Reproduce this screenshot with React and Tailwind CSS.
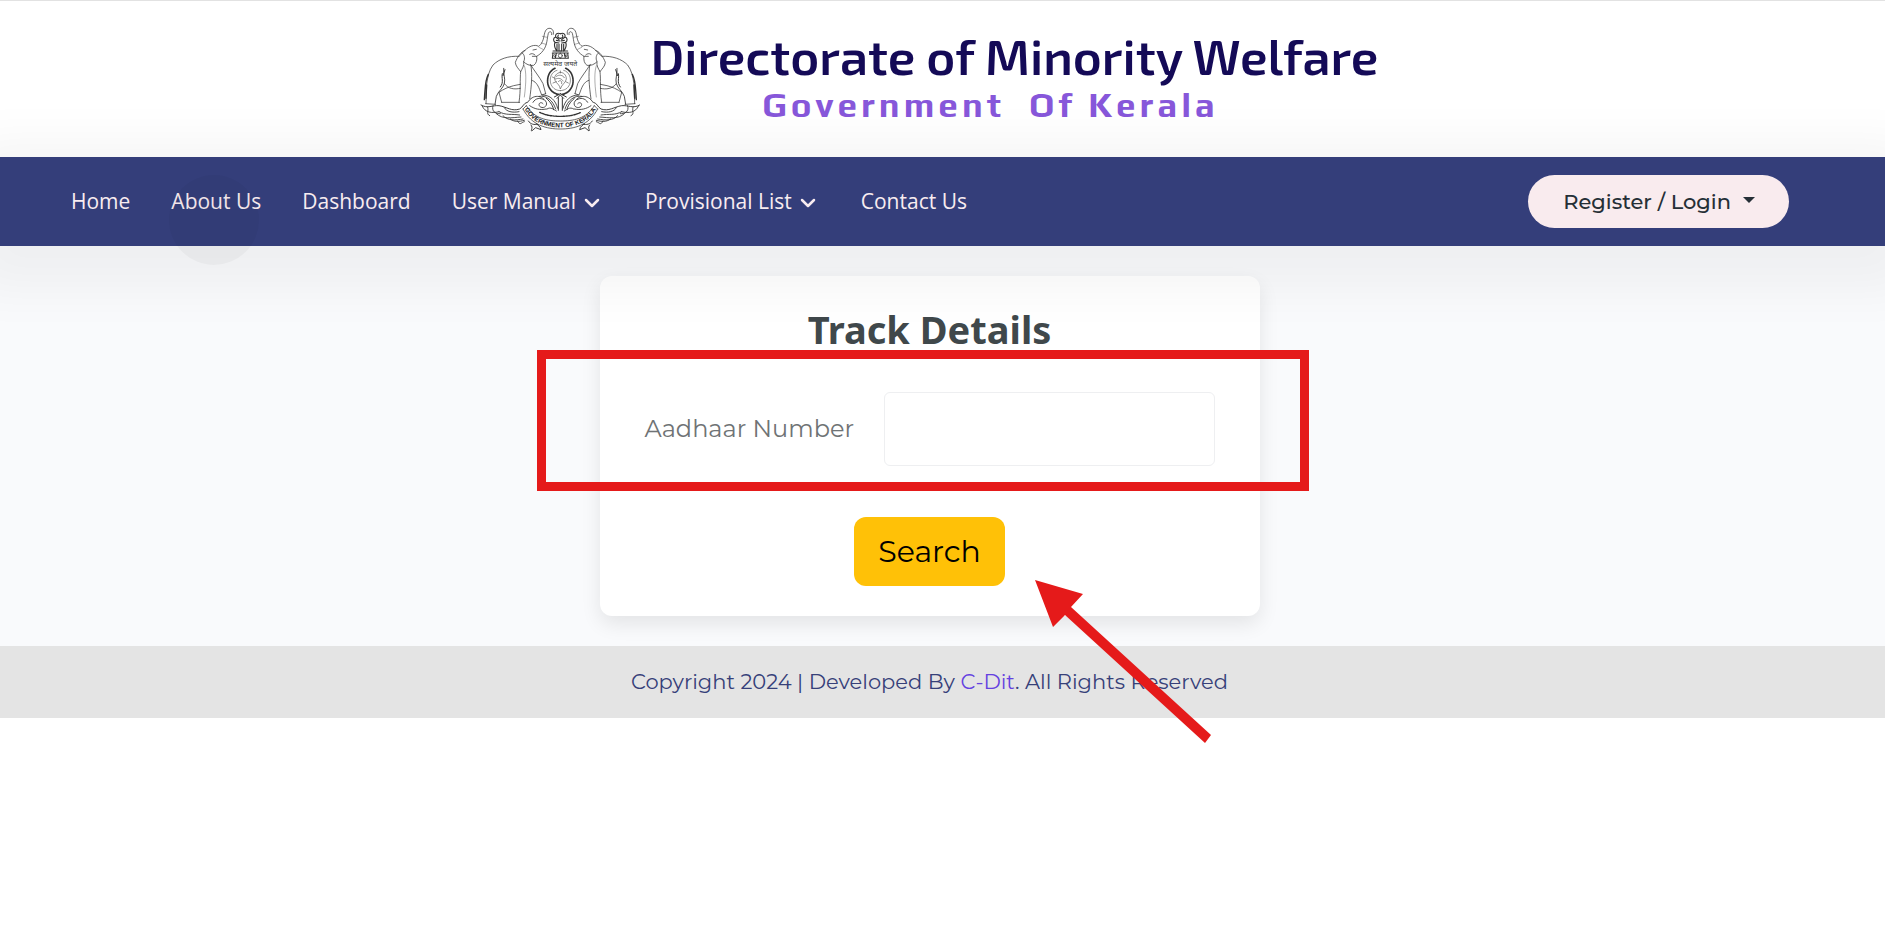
import { ChevronDown } from "lucide-react";

const NAV_ITEMS = [
  { label: "Home" },
  { label: "About Us" },
  { label: "Dashboard" },
  { label: "User Manual", menu: true },
  { label: "Provisional List", menu: true },
  { label: "Contact Us" },
];

function EmblemHalf() {
  return (
    <>
      {/* trunk and head */}
      <path d="M247 58 C250 44 240 37 230 41 C218 47 221 66 214 80 C211 87 207 91 203 94 C190 87 174 94 162 106 L146 122" />
      <path d="M242 59 C244 49 235 47 232 55 C228 70 229 90 217 106 C210 116 203 120 197 124 C199 134 196 146 188 151 C176 153 165 148 158 140" />
      <path d="M176 118 C182 114 188 116 192 120 M186 105 L196 103 M197 124 L184 124" />
      <path d="M214 64 L228 67 M211 84 L225 88 M204 97 L216 103" strokeWidth="1.2" />
      {/* ear */}
      <path d="M162 106 C150 110 139 126 133 142 C134 154 142 160 149 170 C154 160 160 153 158 140 C163 130 160 118 154 114" />
      {/* back, tail and hind legs */}
      <path d="M144 124 C112 122 84 132 66 150 C54 166 50 186 47 208 L45 266" />
      <path d="M52 178 C42 198 43 218 41 238 L40 254 M47 210 L45 250" strokeWidth="4" />
      <path d="M98 160 C96 178 104 190 100 206 C96 220 82 228 76 244 L72 268" strokeWidth="2.6" />
      <path d="M94 176 C90 190 100 200 88 216 M102 164 L96 182" strokeWidth="3" />
      <path d="M84 232 C98 222 112 216 128 212 L148 208 M84 232 L92 262" />
      <path d="M100 206 C112 222 130 224 148 220" />
      {/* front legs */}
      <path d="M149 170 C146 196 150 222 144 262 M180 152 C184 180 182 210 176 252" />
      <path d="M160 152 C166 170 166 200 160 246" strokeWidth="1.2" />
      <path d="M178 148 C190 168 206 186 216 206 L224 236 M182 196 C192 198 200 208 206 224 L212 240 L224 236" />
      <path d="M44 266 L74 268 M92 262 L146 262" />
      {/* foliage */}
      <path d="M30 270 C50 282 64 270 84 272 C108 276 122 290 146 282 C156 276 158 264 168 262" strokeWidth="2.8" />
      <path d="M34 274 C42 292 62 296 84 290 M50 276 C54 290 44 296 56 302 M66 272 C60 290 76 298 88 296 M84 290 C104 302 122 296 146 300 M76 296 C94 314 122 308 150 306 M96 302 C110 318 132 316 156 312 M100 278 C106 290 124 294 144 290 M118 312 C130 322 144 320 160 316 M140 318 C148 334 150 322 160 320" strokeWidth="2.6" />
      <path d="M180 330 C188 340 178 344 182 348 L194 338 L210 344 C208 332 200 332 196 326 M172 318 C178 328 190 330 200 328" strokeWidth="2.8" />
      {/* scrolls next to the centre */}
      <path d="M170 262 C186 236 214 240 226 262 C230 276 214 282 206 274 C200 266 210 258 216 266 M186 262 C194 248 208 248 218 254 M176 272 C190 282 206 286 226 282" strokeWidth="2.6" />
      <path d="M204 244 C226 240 246 256 254 282 M214 240 C238 240 254 256 260 280 M228 282 C240 274 248 284 256 288" strokeWidth="2.6" />
      <path d="M226 250 C240 262 246 274 248 284 M262 248 L262 286" strokeWidth="3" />
      {/* wreath */}
      <path d="M252 160 C232 168 226 194 232 212 C238 228 250 236 262 238" strokeWidth="5" strokeDasharray="4 2" />
      <path d="M258 166 C240 170 234 192 240 208 C246 222 256 226 268 227" strokeWidth="1.6" />
      <path d="M268 236 L250 246 M268 240 L258 250" strokeWidth="3" />
      {/* lion capital */}
      <path d="M268 56 C258 52 252 58 254 66 C246 68 246 78 252 82 C248 92 252 100 256 106 M262 60 C258 66 262 70 268 70 M254 66 L264 74 M252 82 L264 84 M258 88 L258 108 M264 88 L264 108 M256 76 L266 78" strokeWidth="3.4" />
      <path d="M246 108 L268 108 M244 114 L268 114 M244 130 L268 130 M246 114 L244 130 M256 115 L253 129" strokeWidth="3.2" />
      <circle cx="251" cy="122" r="3" />
    </>
  );
}

function Emblem() {
  return (
    <svg
      viewBox="24 0 516 375"
      className="h-[125px] w-[172px] shrink-0"
      fill="none"
      stroke="#333333"
      strokeWidth="2.2"
      strokeLinecap="round"
      strokeLinejoin="round"
      role="img"
      aria-label="Government of Kerala emblem"
    >
      <EmblemHalf />
      <g transform="translate(536 0) scale(-1 1)">
        <EmblemHalf />
      </g>
      <circle cx="268" cy="122" r="6" />
      {/* conch */}
      <g stroke="#666666">
        <path d="M268 172 C256 174 248 184 252 196 C258 208 266 208 268 222 C272 208 284 204 286 192 C286 180 278 172 268 172 M256 184 C264 178 276 180 280 188 M254 192 C262 188 272 190 276 198 M262 200 C266 194 274 196 272 206 M268 168 L268 174" />
        <path d="M244 186 L252 190 M284 200 L292 204 M246 204 L256 200" />
      </g>
      {/* ribbon */}
      <path d="M166 272 C190 312 230 318 268 318 C306 318 346 312 370 272" />
      <path d="M156 282 C182 332 228 342 268 342 C308 342 354 332 380 282" />
      <path d="M156 282 L166 272 M380 282 L370 272" />
      <path d="M206 292 C226 302 250 304 268 304 C286 304 310 302 330 292" strokeDasharray="5 3" strokeWidth="4" />
      <path id="ribbon-line" d="M160 282 C186 326 228 337 268 337 C308 337 350 326 376 282" stroke="none" />
      <text fill="#222222" stroke="none" className="font-['Liberation_Sans'] text-[19px] font-bold">
        <textPath href="#ribbon-line" startOffset="50%" textAnchor="middle">
          GOVERNMENT OF KERALA
        </textPath>
      </text>
      <text x="268" y="153" textAnchor="middle" fill="#3a3a3a" stroke="none" className="font-['Noto_Sans_Devanagari','Noto_Sans',sans-serif] text-[21px]">
        सत्यमेव जयते
      </text>
    </svg>
  );
}

function Header() {
  return (
    <header className="flex h-[157px] items-start justify-center border-t border-[#e2e2e2] bg-white pt-[14px] pr-7">
      <Emblem />
      <div className="pt-1.5 font-['Exo_2','Noto_Sans',sans-serif]">
        <h1 className="text-[50px] leading-[68px] font-semibold whitespace-nowrap text-[#140a57]">
          Directorate of Minority Welfare
        </h1>
        <p className="pr-[48px] text-center font-['Play','Exo_2',sans-serif] text-[35px] leading-[32px] font-bold tracking-[4px] whitespace-pre text-[#8757da]">
          {"Government  Of Kerala"}
        </p>
      </div>
    </header>
  );
}

function NavBar() {
  return (
    <nav className="relative z-10 flex h-[89px] items-center justify-between bg-[#343e7a] pr-24 pl-[71px] shadow-[0_14px_50px_30px_rgba(0,0,0,0.045)]">
      <div className="pointer-events-none absolute top-[18px] left-[169px] size-[90px] rounded-full bg-black/3" />
      <ul className="flex items-center gap-[41px] font-['Open_Sans',sans-serif] text-[21px] text-[#f8ecf0]">
        {NAV_ITEMS.map((item) => (
          <li key={item.label}>
            <a href="#" className="flex items-center gap-1 whitespace-nowrap">
              {item.label}
              {item.menu && <ChevronDown className="mt-0.5 size-6" strokeWidth={2.5} />}
            </a>
          </li>
        ))}
      </ul>
      <button
        type="button"
        className="flex h-[53px] items-center gap-3 rounded-full bg-[#f9ebee] pr-[34px] pl-[35px] font-['Montserrat','Inter',sans-serif] text-[21px] font-medium whitespace-nowrap text-[#252f36]"
      >
        Register / Login
        <svg viewBox="0 0 12 6" className="mb-1 h-[6px] w-3" aria-hidden="true">
          <path d="M0 0H12L6 6Z" fill="currentColor" />
        </svg>
      </button>
    </nav>
  );
}

function TrackCard() {
  return (
    <form
      className="relative flex w-[660px] flex-col items-center rounded-xl bg-white px-[45px] pt-[29px] pb-[30px] font-['Montserrat','Inter',sans-serif] shadow-[0_8px_20px_rgba(0,0,0,0.09)]"
      onSubmit={(e) => e.preventDefault()}
    >
      <h2 className="font-['Noto_Sans',sans-serif] text-[38px] leading-[48px] font-bold text-[#40484b]">
        Track Details
      </h2>
      <div className="mt-[39px] flex w-full items-center justify-between">
        <label htmlFor="aadhaar" className="text-[24px] whitespace-nowrap text-[#6f7375]">
          Aadhaar Number
        </label>
        <input
          id="aadhaar"
          type="text"
          className="h-[74px] w-[331px] rounded-md border border-[#eeeff1] bg-white px-4 text-[24px] outline-none"
        />
      </div>
      <button
        type="submit"
        className="mt-[51px] h-[69px] rounded-xl bg-[#ffc107] px-6 text-[30px] text-black"
      >
        Search
      </button>

      <div className="pointer-events-none absolute top-[74px] -right-[49px] -left-[63px] h-[141px] border-[9px] border-[#e51a1a]" />
      <svg
        viewBox="0 0 176 164"
        className="pointer-events-none absolute top-[304px] left-[435px] z-10 h-[164px] w-[176px]"
        aria-hidden="true"
      >
        <path d="M0 0L48 14L36 27L176 155L170 163L30 35L18 47Z" fill="#e51a1a" />
      </svg>
    </form>
  );
}

export default function App() {
  return (
    <div className="min-h-screen overflow-x-hidden bg-white">
      <Header />
      <NavBar />
      <main className="flex justify-center bg-[#f9fafc] py-[30px] pr-[26px]">
        <TrackCard />
      </main>
      <footer className="flex h-[72px] items-center justify-center bg-[#e4e4e4] pr-[26px] font-['Montserrat','Inter',sans-serif] text-[21px] text-[#364079]">
        <p>
          Copyright 2024 | Developed By{" "}
          <a href="#" className="text-[#6541e0]">
            C-Dit
          </a>
          . All Rights Reserved
        </p>
      </footer>
    </div>
  );
}
